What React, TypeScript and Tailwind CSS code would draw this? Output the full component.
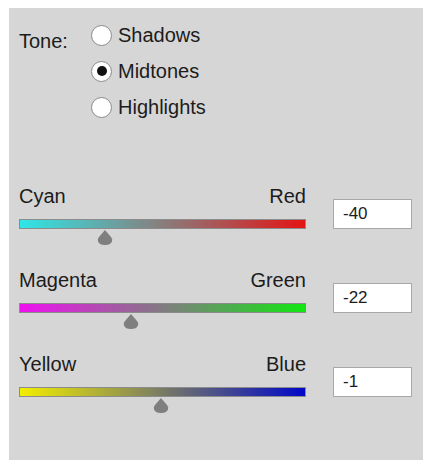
import React from 'react';

interface Balance {
  left: string;
  right: string;
  from: string;
  to: string;
  value: number;
}

const balances: Balance[] = [
  { left: 'Cyan', right: 'Red', from: '#2ee6e6', to: '#e41414', value: -40 },
  { left: 'Magenta', right: 'Green', from: '#f010f0', to: '#12e612', value: -22 },
  { left: 'Yellow', right: 'Blue', from: '#f2ee00', to: '#0008c8', value: -1 },
];

const tones = ['Shadows', 'Midtones', 'Highlights'];

const Radio = ({ checked }: { checked: boolean }) => (
  <span className="w-[21px] h-[21px] rounded-full border-[1.5px] border-[#8a8a8a] bg-white flex items-center justify-center shrink-0">
    {checked && <span className="w-[10px] h-[10px] rounded-full bg-[#111]" />}
  </span>
);

const Thumb = () => (
  <svg width="16" height="15" viewBox="0 0 16 15">
    <path d="M8 0 L14 7 Q16 9 15 11.5 Q13.5 15 8 15 Q2.5 15 1 11.5 Q0 9 2 7 Z" fill="#7f7f7f" />
  </svg>
);

const SliderRow = ({ b }: { b: Balance }) => {
  // -100..100 mapped onto the bar
  const pct = (b.value + 100) / 2;
  return (
    <div className="flex h-[84px]">
      <div className="w-[287px] flex flex-col">
        <div className="flex justify-between h-[24px] leading-[24px]">
          <span>{b.left}</span>
          <span>{b.right}</span>
        </div>
        <div
          className="mt-[11px] h-[10px] border border-[#8c8c8c]"
          style={{ background: `linear-gradient(to right, ${b.from}, ${b.to})` }}
        />
        <div className="relative h-[15px] mt-[1px]">
          <div className="absolute top-0 -translate-x-1/2" style={{ left: `${pct}%` }}>
            <Thumb />
          </div>
        </div>
      </div>
      <div className="ml-[27px] mt-[15px] w-[79px] h-[30px] bg-white border border-[#a8a8a8] pl-[9px] flex items-center text-[17px]">
        {b.value}
      </div>
    </div>
  );
};

export default function App() {
  return (
    <div className="w-[430px] h-[470px] bg-white pt-[8px] pl-[9px]" style={{ fontFamily: '"Liberation Sans", Arial, sans-serif' }}>
      <div className="w-[414px] h-[452px] bg-[#d6d6d6] text-[20px] text-[#1c1c1c] pl-[10px] pt-[9px]">
        {/* Tone */}
        <div className="flex">
          <div className="w-[72px] h-[36px] flex items-center mt-[6px]">Tone:</div>
          <div className="flex flex-col">
            {tones.map((t) => (
              <div key={t} className="h-[36px] flex items-center gap-[6px]">
                <Radio checked={t === 'Midtones'} />
                <span>{t}</span>
              </div>
            ))}
          </div>
        </div>

        {/* Sliders */}
        <div className="mt-[59px]">
          {balances.map((b) => (
            <SliderRow key={b.left} b={b} />
          ))}
        </div>
      </div>
    </div>
  );
}
